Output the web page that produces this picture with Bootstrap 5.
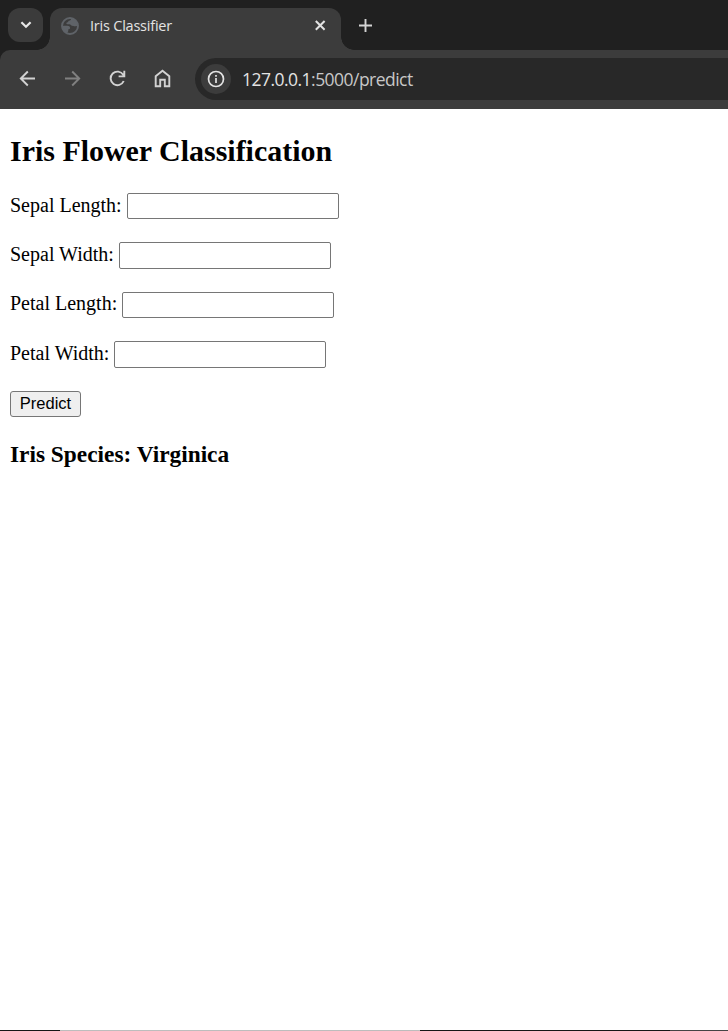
<!DOCTYPE html>
<html lang="en">
<head>
<meta charset="utf-8">
<title>Iris Classifier</title>
<link href="https://cdn.jsdelivr.net/npm/bootstrap@5.3.0/dist/css/bootstrap.min.css" rel="stylesheet">
<style>
  body { background: #fff; overflow: hidden; }
  .chrome-ui { font-family: "Open Sans", sans-serif; color: #e3e3e3; }
  .tab-strip { height: 50px; background: #202020; padding: 8px 0 0 8px; }
  .tab-search { width: 35px; height: 34px; border-radius: 12px; background: #3b3b3b; }
  .page-tab { width: 291px; height: 42px; margin-left: 7px; padding: 0 12px 7px 11px; background: #3c3c3c; border-radius: 12px 12px 0 0; }
  .page-tab::before, .page-tab::after { content: ""; position: absolute; bottom: 0; width: 13px; height: 13px; }
  .page-tab::before { left: -13px; background: radial-gradient(circle at 0 0, transparent 12.5px, #3c3c3c 13px); }
  .page-tab::after { right: -13px; background: radial-gradient(circle at 100% 0, transparent 12.5px, #3c3c3c 13px); }
  .tab-title { font-size: 14.5px; line-height: 20px; letter-spacing: -.22px; margin-left: 11px; white-space: nowrap; }
  .new-tab { margin: 10px 0 0 17px; }
  .toolbar-wrap { background: #202020; }
  .toolbar { height: 59px; background: #3c3c3c; border-radius: 10px 0 0 0; padding: 0 0 1px 5px; }
  .tool { width: 45px; height: 45px; margin-bottom: 1px; }
  .omnibox { height: 42px; margin-left: 10px; padding-left: 6px; background: #282828; border-radius: 21px 0 0 21px; }
  .site-info { width: 30px; height: 30px; background: #3c3c3c; }
  .address { font-size: 17.5px; line-height: 26px; letter-spacing: -.53px; margin-left: 11px; white-space: nowrap; }
  .address span { color: #c7c7c7; }
  .page { flex: 1; padding: 24px 10px 0; font: 20px/23px "Liberation Serif", "Times New Roman", serif; color: #000; }
  .page h2 { font-size: 29.95px; line-height: 36px; font-weight: 700; margin: 0 0 24px; white-space: nowrap; }
  .page h3 { font-size: 23.35px; line-height: 28px; font-weight: 700; margin: 23px 0 0; white-space: nowrap; }
  .field-list { gap: 23.4px; }
  .field-row { height: 26px; gap: 5px; }
  .field-row label { padding-bottom: 2px; white-space: nowrap; }
  .field-row input { width: 212px; height: 26px; border: 1px solid #767676; border-radius: 2px; background: #fff; }
  .field-row:nth-child(even) input { height: 27px; margin-bottom: -1px; }
  .submit-btn { width: 71px; height: 26px; padding: 0; border: 1px solid #767676; border-radius: 3px; background: #efefef; color: #000; font: 16.5px/23px "Liberation Sans", Arial, sans-serif; }
  .bottom-edge { height: 1px; background: linear-gradient(to right, #161616 60px, #bdbdbd 60px 420px, #161616 420px 670px, #444 670px); }
</style>
</head>
<body>
<div class="d-flex flex-column vh-100">
  <header class="chrome-ui">
    <div class="tab-strip d-flex align-items-start">
      <div class="tab-search d-flex align-items-center justify-content-center">
        <svg width="12" height="8" viewBox="0 0 12 8" fill="none" stroke="#e8e8e8" stroke-width="2.2"><path d="M1.400 1.300 6 5.800l4.600-4.500"/></svg>
      </div>
      <div class="page-tab position-relative d-flex align-items-center">
        <svg width="18" height="18" viewBox="0 0 18 18"><circle cx="9" cy="9" r="8" fill="#3c3c3c" stroke="#5f6368" stroke-width="1.900"/><path fill="#5f6368" d="M10 1c.3 1.800-.5 2.500-2 2.700-.9.200-.7 1.700-2 1.900-1 .2-.8 1.600.3 1.700h2.200c1.200.1 1.500 1.300 2.600 1.400 1.300.1 1.800.700 3 .6l2.900-.3C17 5 14 1.500 10 1zM1 8.700l5.500.1c1.900 0 2.600 1 2.600 2.200 0 1-.8 1.300-1.800 1.300v1.500c0 1.200-1 1.200-1 2.700C3 15.300 1 12.500 1 8.700z"/></svg>
        <span class="tab-title">Iris Classifier</span>
        <svg class="ms-auto" width="17" height="17" viewBox="0 0 17 17" stroke="#e3e3e3" stroke-width="2"><path d="m3.800 4 8.800 8.800M12.600 4l-8.800 8.800"/></svg>
      </div>
      <svg class="new-tab" width="15" height="15" viewBox="0 0 15 15" stroke="#d4d4d4" stroke-width="1.900"><path d="M7.500 1v13M1 7.500h13"/></svg>
    </div>
    <div class="toolbar-wrap">
      <div class="toolbar d-flex align-items-center">
        <div class="tool d-flex align-items-center justify-content-center"><svg width="17" height="17" viewBox="0 0 17 17" fill="none" stroke="#d2d2d2" stroke-width="1.900"><path d="M16 8.500H2M8.800 1.500l-7 7 7 7"/></svg></div>
        <div class="tool d-flex align-items-center justify-content-center"><svg width="17" height="17" viewBox="0 0 17 17" fill="none" stroke="#808080" stroke-width="1.900"><path d="M1 8.500h14M8.200 1.500l7 7-7 7"/></svg></div>
        <div class="tool d-flex align-items-center justify-content-center"><svg width="17" height="17" viewBox="0 0 17 17" fill="none" stroke="#d2d2d2" stroke-width="1.900"><path d="M14.700 11A6.800 6.800 0 1 1 14.200 4.800L15 6M15.300.7v5.700H9.600"/></svg></div>
        <div class="tool d-flex align-items-center justify-content-center"><svg width="17" height="19" viewBox="0 0 17 19" fill="none" stroke="#d2d2d2" stroke-width="1.900"><path d="M1.700 17.300V7.200l6.800-5.400 6.800 5.400v10.100h-4.500v-6.500H6.200v6.500z"/></svg></div>
        <div class="omnibox flex-grow-1 d-flex align-items-center">
          <div class="site-info rounded-circle d-flex align-items-center justify-content-center"><svg width="18" height="18" viewBox="0 0 18 18" fill="none" stroke="#e3e3e3" stroke-width="1.700"><circle cx="9" cy="9" r="7.500"/><path d="M9 8v5M9 5v1.700"/></svg></div>
          <div class="address">127.0.0.1<span>:5000/predict</span></div>
        </div>
      </div>
    </div>
  </header>
  <main class="page">
    <h2>Iris Flower Classification</h2>
    <form class="field-list d-flex flex-column align-items-start">
      <div class="field-row d-flex align-items-center"><label for="sl">Sepal Length:</label><input id="sl" type="text"></div>
      <div class="field-row d-flex align-items-center"><label for="sw">Sepal Width:</label><input id="sw" type="text"></div>
      <div class="field-row d-flex align-items-center"><label for="pl">Petal Length:</label><input id="pl" type="text"></div>
      <div class="field-row d-flex align-items-center"><label for="pw">Petal Width:</label><input id="pw" type="text"></div>
      <button class="submit-btn" type="button">Predict</button>
    </form>
    <h3>Iris Species: Virginica</h3>
  </main>
  <div class="bottom-edge"></div>
</div>
<script src="https://cdn.jsdelivr.net/npm/bootstrap@5.3.0/dist/js/bootstrap.bundle.min.js"></script>
</body>
</html>
